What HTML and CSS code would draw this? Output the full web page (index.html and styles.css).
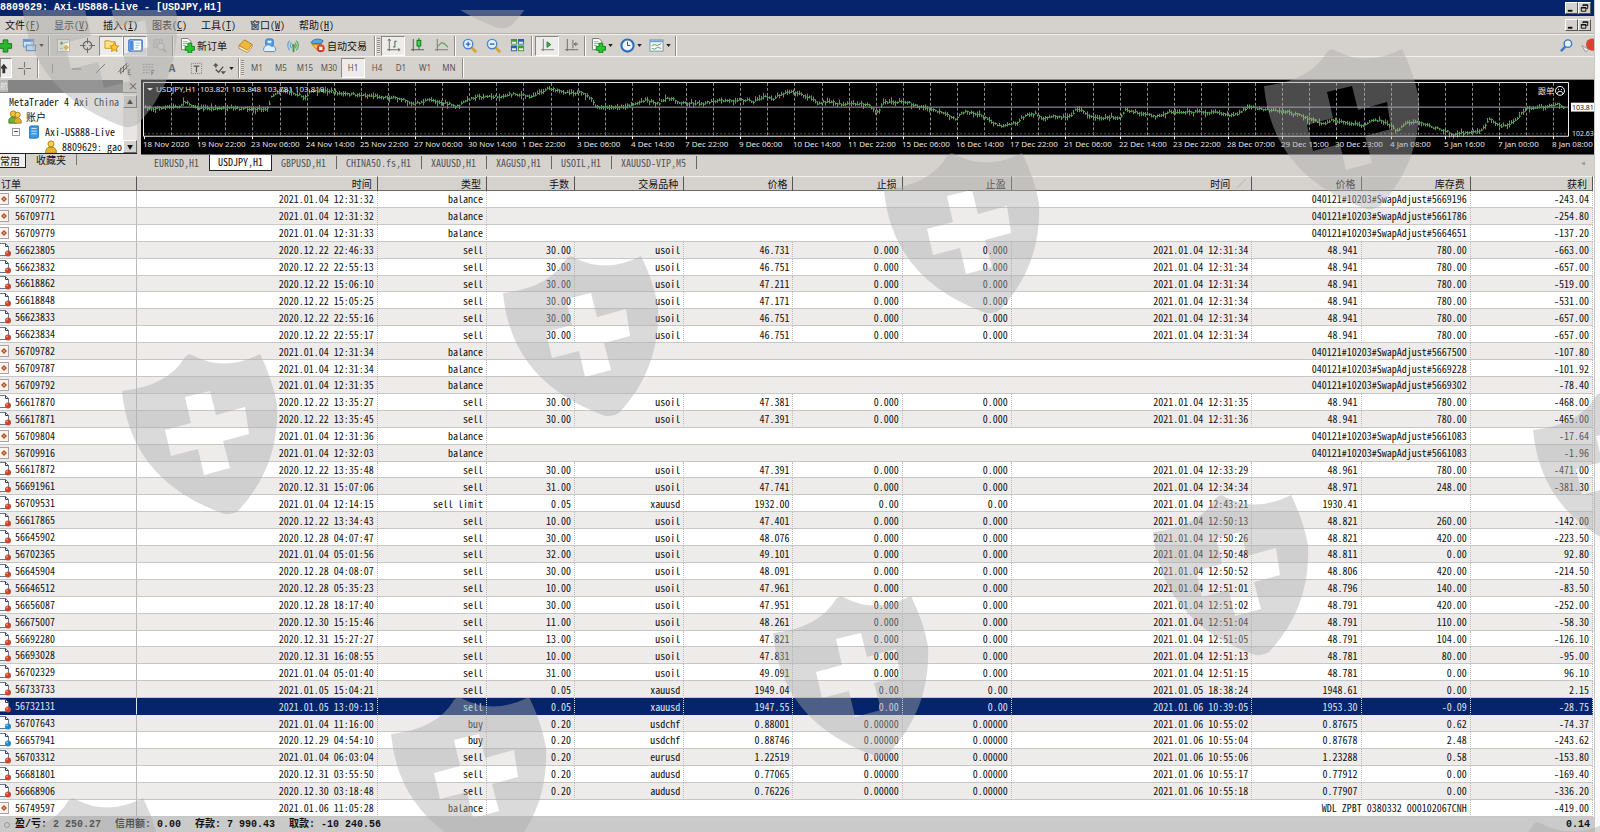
FILE: index.html
```html
<!DOCTYPE html>
<html lang="zh-CN">
<head>
<meta charset="utf-8">
<title>8809629: Axi-US888-Live - [USDJPY,H1]</title>
<link rel="stylesheet" href="styles.css">
</head>
<body>
<svg class="sprite" aria-hidden="true">
  <symbol id="i-plus" viewBox="0 0 16 16"><path d="M5.500 2h5v4h4v5h-4v4h-5v-4h-4V6h4z" fill="#2db52d" stroke="#0a7a12"/></symbol>
  <symbol id="i-windows" viewBox="0 0 16 16"><rect x="1.500" y="1.500" width="11" height="8" fill="#cfe2f6" stroke="#6d95c0"/><path d="M2 3h10" stroke="#5c8fd0" stroke-width="2"/><rect x="4.500" y="7.500" width="10" height="6" fill="#b9d2ee" stroke="#5f86b2"/></symbol>
  <symbol id="i-market" viewBox="0 0 16 16"><rect x="1.500" y="1.500" width="13" height="13" fill="#fbfbf2" stroke="#b9b59c"/><path d="M4 5.500l2-2 2 2-2 2z" fill="#3a9a4a"/><path d="M8 10l3-3 3 3-3 3z" fill="#e8b534"/><path d="M4 11h3M9 5h4" stroke="#8bb"/></symbol>
  <symbol id="i-target" viewBox="0 0 16 16" fill="none" stroke="#666"><circle cx="8" cy="8" r="4.500" stroke-width="1.300"/><path d="M8 0v6M8 10v6M0 8h6M10 8h6"/></symbol>
  <symbol id="i-star" viewBox="0 0 16 16"><path d="M1 3h5l1 1h5v7H1z" fill="#ffe28a" stroke="#c9932a"/><path d="M11 5l1.500 3.200 3.300.4-2.400 2.300.6 3.500-3-1.700-3 1.700.6-3.500L6.200 8.600l3.300-.4z" fill="#ffc928" stroke="#b87b12" stroke-width=".8"/></symbol>
  <symbol id="i-panel" viewBox="0 0 16 16"><rect x="1" y="2" width="14" height="12" rx="1" fill="#fff" stroke="#2d6cc0" stroke-width="1.500"/><rect x="2" y="3" width="4" height="10" fill="#4b8ee0"/><path d="M8 5.500h5M8 8h4M8 10.500h3" stroke="#9ab8dd"/></symbol>
  <symbol id="i-tester" viewBox="0 0 16 16" fill="none" stroke="#aaa"><path d="M2 2h9v8H2zM5 4v5M8 3v4"/><circle cx="9.500" cy="9" r="3.500" fill="#ddd"/><path d="M12 12l3 3" stroke-width="2"/></symbol>
  <symbol id="i-neworder" viewBox="0 0 16 16"><path d="M1.500.5h7l3 3v9h-10z" fill="#fff" stroke="#777"/><path d="M3 4h5M3 6h6M3 8h3" stroke="#8a8"/><path d="M8.500 5.500h4v3.500h3v4h-3v3h-4v-3h-3V9h3z" fill="#2fc02f" stroke="#0b8414"/></symbol>
  <symbol id="i-book" viewBox="0 0 16 16"><path d="M1 8l6-6 8 5-5 7z" fill="#efb93a" stroke="#b37a14"/><path d="M1 8v3l9 4.500 5-6V7l-5 6z" fill="#fff3cf" stroke="#b37a14" stroke-width=".8"/></symbol>
  <symbol id="i-cloud" viewBox="0 0 16 16"><rect x="4" y="1" width="8" height="8" rx="2" fill="#56a4ea" stroke="#2b72b8"/><path d="M6 4h4" stroke="#fff" stroke-width="2"/><path d="M3 14.500a3 3 0 010-5 4 4 0 017-.5 3 3 0 013 5.500z" fill="#e3f0fc" stroke="#4b8acb"/></symbol>
  <symbol id="i-signal" viewBox="0 0 16 16" fill="none"><path d="M4 13a7 7 0 010-10M6 11a4 4 0 010-6" stroke="#6aa7d8" stroke-width="1.400"/><path d="M11 3a7 7 0 010 10M9.500 5a4 4 0 010 6" stroke="#55b060" stroke-width="1.400"/><path d="M8 8v7" stroke="#3f9e4c" stroke-width="2"/><circle cx="8" cy="8" r="1.600" fill="#3f9e4c"/></symbol>
  <symbol id="i-auto" viewBox="0 0 16 16"><path d="M1 5c2-4 9-5 13-2l-2 3H4z" fill="#58a6de" stroke="#2b72a8"/><path d="M2 7h10l-3 7z" fill="#f2c343" stroke="#b98715"/><circle cx="11.500" cy="11" r="4.200" fill="#dd3a22"/><rect x="9.700" y="9.200" width="3.600" height="3.600" fill="#fff"/></symbol>
  <symbol id="i-bars" viewBox="0 0 16 16" fill="none" stroke="#666"><path d="M3.500 1v13M1 12.500h14M2 3l1.500-2L5 3M13 11l2 1.500-2 1.500"/><path d="M9.500 3v7M9.500 3.500h2M7.500 9.500h2" stroke="#3c6b3c"/></symbol>
  <symbol id="i-candles" viewBox="0 0 16 16" fill="none" stroke="#555"><path d="M3.500 1v13M1 12.500h14"/><path d="M9.500 0v12" stroke="#0a7a12"/><rect x="7.500" y="2.500" width="4" height="6" fill="#3fd052" stroke="#0a7a12"/></symbol>
  <symbol id="i-line" viewBox="0 0 16 16" fill="none" stroke="#777"><path d="M3.500 1v13M1 12.500h14"/><path d="M4 9l4-4 3 1 4 4" stroke="#5aa35e" stroke-width="1.300"/></symbol>
  <symbol id="i-zoomin" viewBox="0 0 16 16"><path d="M10 10l5 5" stroke="#d3a52e" stroke-width="3"/><circle cx="6.500" cy="6.500" r="5" fill="#e4f0fc" stroke="#4a86d0" stroke-width="1.500"/><path d="M4 6.500h5M6.500 4v5" stroke="#2d6cc0" stroke-width="1.500"/></symbol>
  <symbol id="i-zoomout" viewBox="0 0 16 16"><path d="M10 10l5 5" stroke="#d3a52e" stroke-width="3"/><circle cx="6.500" cy="6.500" r="5" fill="#e4f0fc" stroke="#4a86d0" stroke-width="1.500"/><path d="M4 6.500h5" stroke="#2d6cc0" stroke-width="1.500"/></symbol>
  <symbol id="i-tile" viewBox="0 0 16 16"><path d="M1 1h6.500v6H1zM8.500 8h6.500v6H8.500z" fill="#3f9b3a"/><path d="M8.500 1h6.500v6H8.500zM1 8h6.500v6H1z" fill="#2d5fae"/><path d="M2 4h4.500v2H2zM9.500 4H14v2H9.500zM2 11h4.500v2H2zM9.500 11H14v2H9.500z" fill="#e9f2e4"/></symbol>
  <symbol id="i-scroll" viewBox="0 0 16 16" fill="none" stroke="#777"><path d="M3.500 1v13M1 12.500h14"/><path d="M7.500 4l4 3-4 3z" fill="#3fae4a" stroke="#23832e"/></symbol>
  <symbol id="i-shift" viewBox="0 0 16 16" fill="none" stroke="#666"><path d="M3.500 1v13M1 12.500h14M9.500 2v9"/><path d="M15 6.500h-4M13 4.500l-2 2 2 2" stroke="#555"/></symbol>
  <symbol id="i-clock" viewBox="0 0 16 16"><circle cx="8" cy="8" r="6.500" fill="#eef5fd" stroke="#2d6cb8" stroke-width="2.200"/><path d="M8 4v4h3" fill="none" stroke="#444"/></symbol>
  <symbol id="i-template" viewBox="0 0 16 16"><rect x="1" y="2" width="14" height="12" fill="#f4f8f4" stroke="#7396ba"/><path d="M1 3.500h14" stroke="#6f9fd6" stroke-width="2"/><path d="M3 8l3-1 3 1 4-2M3 11l3 1 3-2 4 1" fill="none" stroke="#589a60"/></symbol>
  <symbol id="i-search" viewBox="0 0 16 16"><path d="M7 9l-5 5" stroke="#3b78c9" stroke-width="2.500"/><circle cx="9.500" cy="6" r="4" fill="#eaf3fd" stroke="#3b78c9" stroke-width="1.500"/></symbol>
  <symbol id="i-alert" viewBox="0 0 16 16"><path d="M3 8l4 7 3-3z" fill="#eee" stroke="#999"/><circle cx="14" cy="7" r="6.500" fill="#d8432f"/></symbol>
  <symbol id="i-cursor" viewBox="0 0 16 16"><path d="M-1 8L3 3l4 5H4.500v5h-3V8z" fill="#333"/></symbol>
  <symbol id="i-cross" viewBox="0 0 16 16"><path d="M8 1v6M8 9v6M1 8h6M9 8h6" stroke="#777" stroke-width="1.200"/></symbol>
  <symbol id="i-vline" viewBox="0 0 16 16"><path d="M8 3v10" stroke="#888"/></symbol>
  <symbol id="i-hline" viewBox="0 0 16 16"><path d="M3 8.500h10" stroke="#777"/></symbol>
  <symbol id="i-diag" viewBox="0 0 16 16"><path d="M3 13L13 3" stroke="#777"/></symbol>
  <symbol id="i-channel" viewBox="0 0 16 16" fill="none" stroke="#666"><path d="M1 12L11 2M4 13L13 4M4 7v7M7 5v7M10 2v7M12 9.500h3M12 12h2M12 14.500h3M12 9.500v5"/></symbol>
  <symbol id="i-fibo" viewBox="0 0 16 16" fill="none" stroke="#888"><path d="M2 3.500h12M2 6.500h12M2 9.500h9M2 12.500h7" stroke-dasharray="2 1"/><path d="M11.500 15v-5h3M11.500 12.500h2" stroke="#666"/></symbol>
  <symbol id="i-label" viewBox="0 0 16 16" fill="none" stroke="#777"><rect x="2.500" y="2.500" width="11" height="11" stroke-dasharray="1 1"/><path d="M5 5.500h6M8 5.500V12" stroke="#555" stroke-width="1.300"/></symbol>
  <symbol id="i-arrows" viewBox="0 0 16 16"><path d="M1 5l3-3 3 3-2 0v2h-2V5z" fill="#555"/><path d="M4 9l3 3 5-6" fill="none" stroke="#555" stroke-width="1.500"/><path d="M9 11h6l-3 3z" fill="#555"/></symbol>
  <symbol id="i-caret" viewBox="0 0 6 4"><path d="M0 0h6L3 4z" fill="#222"/></symbol>
  <symbol id="i-people" viewBox="0 0 16 16"><circle cx="6" cy="4.500" r="3.500" fill="#f0c03c" stroke="#a77b10"/><path d="M1 15V11q1-3 5-3t4 3v4z" fill="#6db33f" stroke="#437a1e"/><circle cx="11" cy="5.500" r="3" fill="#f5cf55" stroke="#a77b10"/><path d="M7 15v-3q1-3 4-3t4 3v3z" fill="#e4b02c" stroke="#a77b10"/></symbol>
  <symbol id="i-server" viewBox="0 0 16 16"><path d="M4 1h9v13l-2 1H3V2z" fill="#3c9be6" stroke="#1c66a8"/><path d="M5 4h6M5 7h6M5 10h6" stroke="#d6ebff"/></symbol>
  <symbol id="i-user" viewBox="0 0 16 16"><circle cx="8" cy="4.500" r="3.500" fill="#f5cf55" stroke="#a77b10"/><path d="M2 15v-3q1-4 6-4t6 4v3z" fill="#e8b52e" stroke="#a77b10"/></symbol>
  <symbol id="i-balance" viewBox="0 0 12 14"><rect x="-2.500" y="1.500" width="11" height="11" fill="#fbf3ec" stroke="#a9a0a8"/><path d="M4 4L7 7 4 10 1 7z" fill="#b4542a"/><path d="M3 7h2" stroke="#f4c9a0"/></symbol>
  <symbol id="i-sell" viewBox="0 0 12 14"><path d="M-3 .5H5.500L8.500 3.500V12.500H-3z" fill="#fff" stroke="#667a96"/><path d="M5.500.5v3h3" fill="none" stroke="#3a3f4c"/><circle cx="8" cy="10.500" r="3" fill="#c9452a"/><circle cx="7" cy="9.500" r="1" fill="#ee8f76"/></symbol>
  <symbol id="i-buy" viewBox="0 0 12 14"><path d="M-3 .5H5.500L8.500 3.500V12.500H-3z" fill="#fff" stroke="#667a96"/><path d="M5.500.5v3h3" fill="none" stroke="#3a3f4c"/><circle cx="8" cy="10.500" r="3" fill="#2187c9"/><circle cx="7" cy="9.500" r="1" fill="#86c6ee"/></symbol>
  <symbol id="i-min" viewBox="0 0 12 10"><path d="M2 8h5" stroke="#000" stroke-width="2"/></symbol>
  <symbol id="i-restore" viewBox="0 0 12 10" fill="none" stroke="#000"><path d="M4.500 3V1.500h5v4H8M4 2h6"/><path d="M2.500 4.500h5v4h-5zM2 5h6"/></symbol>
  <symbol id="i-shield" viewBox="0 0 156 162"><path fill-rule="evenodd" d="M0 37Q46 32 63 3Q67-2 72 2Q103 18 138 0Q150 24 155 50Q158 112 116 157Q107 163 97 158Q8 124 0 37ZM63 43L88 37 94 61 123 53 127 80 101 87 108 114 82 121 76 95 49 102 43 76 69 69Z"/></symbol>
</svg>

<div class="screen">
<main class="app">
  <header class="titlebar">
    <h1>8809629: Axi-US888-Live - [USDJPY,H1]</h1>
    <div class="winbtns"><button aria-label="最小化"><svg><use href="#i-min"/></svg></button><button aria-label="还原"><svg><use href="#i-restore"/></svg></button></div>
  </header>
  <nav class="menubar">
    <div class="menus">
      <button>文件(<u>F</u>)</button><button>显示(<u>V</u>)</button><button>插入(<u>I</u>)</button><button>图表(<u>C</u>)</button><button>工具(<u>T</u>)</button><button>窗口(<u>W</u>)</button><button>帮助(<u>H</u>)</button>
    </div>
    <div class="winbtns"><button aria-label="最小化图表"><svg><use href="#i-min"/></svg></button><button aria-label="还原图表"><svg><use href="#i-restore"/></svg></button></div>
  </nav>

  <div class="toolbar">
    <button class="tool cut drop" aria-label="新图表"><svg><use href="#i-plus"/></svg><svg class="caret"><use href="#i-caret"/></svg></button>
    <button class="tool drop" aria-label="配置文件"><svg><use href="#i-windows"/></svg><svg class="caret"><use href="#i-caret"/></svg></button>
    <span class="sep"></span>
    <button class="tool" aria-label="市场报价"><svg><use href="#i-market"/></svg></button>
    <button class="tool" aria-label="数据窗口"><svg><use href="#i-target"/></svg></button>
    <button class="tool on" aria-label="导航"><svg><use href="#i-star"/></svg></button>
    <button class="tool on" aria-label="终端"><svg><use href="#i-panel"/></svg></button>
    <button class="tool" aria-label="策略测试"><svg><use href="#i-tester"/></svg></button>
    <span class="sep"></span>
    <button class="tool text"><svg><use href="#i-neworder"/></svg>新订单</button>
    <button class="tool" aria-label="编辑器"><svg><use href="#i-book"/></svg></button>
    <button class="tool" aria-label="社区"><svg><use href="#i-cloud"/></svg></button>
    <button class="tool" aria-label="信号"><svg><use href="#i-signal"/></svg></button>
    <button class="tool text"><svg><use href="#i-auto"/></svg>自动交易</button>
    <span class="sep"></span><span class="grip"></span>
    <button class="tool on" aria-label="柱状图"><svg><use href="#i-bars"/></svg></button>
    <button class="tool" aria-label="蜡烛图"><svg><use href="#i-candles"/></svg></button>
    <button class="tool" aria-label="折线图"><svg><use href="#i-line"/></svg></button>
    <span class="sep"></span>
    <button class="tool" aria-label="放大"><svg><use href="#i-zoomin"/></svg></button>
    <button class="tool" aria-label="缩小"><svg><use href="#i-zoomout"/></svg></button>
    <button class="tool" aria-label="平铺"><svg><use href="#i-tile"/></svg></button>
    <span class="sep wide"></span>
    <button class="tool on" aria-label="自动滚动"><svg><use href="#i-scroll"/></svg></button>
    <button class="tool" aria-label="图表平移"><svg><use href="#i-shift"/></svg></button>
    <span class="sep"></span>
    <button class="tool drop" aria-label="指标"><svg><use href="#i-neworder"/></svg><svg class="caret"><use href="#i-caret"/></svg></button>
    <button class="tool drop" aria-label="周期"><svg><use href="#i-clock"/></svg><svg class="caret"><use href="#i-caret"/></svg></button>
    <button class="tool drop" aria-label="模板"><svg><use href="#i-template"/></svg><svg class="caret"><use href="#i-caret"/></svg></button>
    <span class="sep"></span>
    <div class="right">
      <button class="tool" aria-label="搜索"><svg><use href="#i-search"/></svg></button>
      <button class="tool alert" aria-label="提醒"><svg><use href="#i-alert"/></svg></button>
    </div>
  </div>

  <div class="toolbar second">
    <button class="tool on first" aria-label="光标"><svg><use href="#i-cursor"/></svg></button>
    <button class="tool" aria-label="十字线"><svg><use href="#i-cross"/></svg></button>
    <span class="sep"></span>
    <button class="tool" aria-label="垂直线"><svg><use href="#i-vline"/></svg></button>
    <button class="tool" aria-label="水平线"><svg><use href="#i-hline"/></svg></button>
    <button class="tool" aria-label="趋势线"><svg><use href="#i-diag"/></svg></button>
    <button class="tool" aria-label="通道"><svg><use href="#i-channel"/></svg></button>
    <button class="tool" aria-label="斐波纳契"><svg><use href="#i-fibo"/></svg></button>
    <button class="tool letter">A</button>
    <button class="tool" aria-label="标签"><svg><use href="#i-label"/></svg></button>
    <button class="tool drop" aria-label="箭头"><svg><use href="#i-arrows"/></svg><svg class="caret"><use href="#i-caret"/></svg></button>
    <span class="sep"></span><span class="grip"></span>
    <button class="tool tf">M1</button><button class="tool tf">M5</button><button class="tool tf">M15</button><button class="tool tf">M30</button><button class="tool tf on">H1</button><button class="tool tf">H4</button><button class="tool tf">D1</button><button class="tool tf">W1</button><button class="tool tf">MN</button>
    <span class="sep"></span>
  </div>

  <div class="work">
    <aside class="navigator">
      <div class="navhead"><span class="navtitle">航</span><button aria-label="关闭">×</button></div>
      <div class="treebox">
        <ul class="tree">
          <li class="l0">MetaTrader 4 Axi China</li>
          <li class="l1"><svg><use href="#i-people"/></svg>账户</li>
          <li class="l2"><span class="box"></span><svg><use href="#i-server"/></svg>Axi-US888-Live</li>
          <li class="l3"><svg><use href="#i-user"/></svg>8809629: gao</li>
        </ul>
        <div class="scroll"><button aria-label="向上">▲</button><button aria-label="向下">▼</button></div>
      </div>
      <div class="navtabs"><button class="active">常用</button><button>收藏夹</button></div>
    </aside>
    <section class="charts">
      <svg class="chart" id="chart" viewBox="0 0 1453 75" preserveAspectRatio="none" role="img" aria-label="USDJPY,H1"></svg>
      <div class="tabs" id="tabs">
        <button>EURUSD,H1</button><button class="active">USDJPY,H1</button><button>GBPUSD,H1</button><button>CHINA50.fs,H1</button><button>XAUUSD,H1</button><button>XAGUSD,H1</button><button>USOIL,H1</button><button>XAUUSD-VIP,M5</button><span class="more">◂</span>
      </div>
    </section>
  </div>

  <section class="terminal">
    <table>
      <colgroup><col class="c-order"><col class="c-time"><col class="c-mid"><col class="c-lots"><col class="c-mid"><col class="c-mid"><col class="c-mid"><col class="c-mid"><col class="c-time"><col class="c-mid"><col class="c-mid"><col class="c-profit"></colgroup>
      <thead><tr><th>订单</th><th>时间</th><th>类型</th><th>手数</th><th>交易品种</th><th>价格</th><th>止损</th><th>止盈</th><th class="sorted">时间<i>∕</i></th><th>价格</th><th>库存费</th><th>获利</th></tr></thead>
      <tbody id="rows"></tbody>
    </table>
  </section>
  <footer class="status"><span class="dot"></span><span>盈/亏: <b>2 250.27</b></span><span>信用额: <b>0.00</b></span><span>存款: <b>7 990.43</b></span><span>取款: <b>-10 240.56</b></span><b class="total">0.14</b></footer>
</main>
<div class="edge"></div>
</div>
<div class="marks" id="marks" aria-hidden="true"></div>
<script src="app.js"></script>
</body>
</html>
```

FILE: styles.css
```css
* { box-sizing: border-box; }
body {
  margin: 0;
  height: 100vh;
  overflow: hidden;
  position: relative;
  background: #d5d2ce;
  color: #111;
  font: 10px/14px "Noto Sans Mono CJK SC", "Noto Sans CJK SC", "Liberation Mono", monospace;
}
button { margin: 0; padding: 0; border: 0; background: none; color: inherit; font: inherit; }
.sprite { position: absolute; width: 0; height: 0; }
.screen { display: flex; height: 100vh; }
.app { flex: 1; min-width: 0; display: flex; flex-direction: column; }
.edge { width: 6px; background: #fafafa; border-left: 1px solid #c8c8c8; }

.titlebar { height: 16px; flex: none; display: flex; align-items: center; justify-content: space-between; background: #06246b; color: #fff; }
.titlebar h1 { margin: 0; font: bold 10px/16px "Liberation Mono", monospace; }
.winbtns { display: flex; padding-right: 3px; }
.winbtns button { width: 13px; height: 12px; background: #d5d2ce; border: 1px solid; border-color: #fff #555 #555 #fff; display: flex; }
.winbtns svg { width: 11px; height: 10px; }
.menubar { height: 18px; flex: none; display: flex; align-items: center; justify-content: space-between; border-bottom: 1px solid #b5b2ae; }
.menus { display: flex; gap: 14px; padding-left: 5px; }

.toolbar { height: 22px; flex: none; display: flex; align-items: center; border-top: 1px solid #f2f0ee; }
.second { height: 23px; }
.tool { width: 24px; height: 20px; display: flex; align-items: center; justify-content: center; flex: none; }
.tool svg { width: 15px; height: 15px; }
.tool.on { background: #eeecea; border: 1px solid; border-color: #8a8884 #fff #fff #8a8884; }
.tool .caret { width: 5px; height: 3px; margin-left: 2px; }
.tool.drop { width: 29px; }
.tool.cut { width: 18px; overflow: hidden; justify-content: flex-end; padding-right: 3px; }
.tool.cut svg:first-child { flex: none; }
.tool.first { width: 12px; overflow: hidden; justify-content: flex-start; }
.tool.first svg { flex: none; }
.tool.text { width: auto; padding: 0 6px 0 5px; gap: 2px; }
.tool.alert { width: 16px; }
.tool.letter { color: #666; font: bold 10px/14px "Noto Sans", sans-serif; }
.tool.tf { color: #555; font: 8px/14px "Noto Sans", sans-serif; }
.right { margin-left: auto; display: flex; }
.sep { width: 2px; height: 20px; margin: 0 1px; border-left: 1px solid #8f8c88; border-right: 1px solid #fff; flex: none; }
.sep.wide { margin: 0 2px; }
.grip { width: 3px; height: 16px; margin-right: 1px; background: repeating-linear-gradient(#8f8c88 0 1px, #e8e6e4 1px 2px); flex: none; }

.work { flex: none; display: flex; gap: 2px; }
.navigator { width: 139px; flex: none; display: flex; flex-direction: column; }
.navhead { height: 13px; display: flex; gap: 4px; align-items: center; }
.navtitle { flex: 1; background: linear-gradient(90deg, #b5b3b0 0 8px, #858585 8px); color: #eee; font-size: 8px; line-height: 12px; }
.navhead button { width: 12px; line-height: 12px; }
.treebox { height: 62px; display: flex; background: #fff; border-top: 1px solid #888; border-bottom: 1px solid #222; margin-right: 2px; overflow: hidden; }
.tree { flex: 1; min-width: 0; margin: 0; padding: 1px 0 0; list-style: none; overflow: hidden; white-space: nowrap; }
.tree li { height: 15px; display: flex; align-items: center; gap: 4px; }
.tree svg { width: 14px; height: 14px; flex: none; }
.tree .l0 { padding-left: 9px; }
.tree .l1 { padding-left: 8px; }
.tree .l2 { padding-left: 12px; }
.tree .l3 { padding-left: 44px; }
.box { width: 8px; height: 8px; border: 1px solid #999; background: linear-gradient(#555, #555) center / 4px 1px no-repeat; margin-right: 3px; }
.scroll { width: 14px; display: flex; flex-direction: column; justify-content: space-between; background: #e8e6e4; padding-top: 2px; }
.scroll button { height: 13px; font-size: 6px; line-height: 11px; background: #d5d2ce; border: 1px solid; border-color: #fff #666 #666 #fff; }
.navtabs { display: flex; height: 14px; line-height: 12px; }
.navtabs button { padding: 0 10px; border-right: 1px solid #777; height: 11px; line-height: 11px; }
.navtabs .active { padding: 0 5px 0 0; height: 14px; background: #f0eeec; border-bottom: 1px solid #222; border-right: 1px solid #222; }

.charts { flex: 1; min-width: 0; }
.chart { display: block; width: 100%; height: 75px; background: #000; border-top: 1px solid #8a8884; font: 8px "Noto Sans", sans-serif; }
.chart text { fill: #e4e4e4; }
.chart .price { font-size: 7px; }
.tabs { display: flex; height: 18px; align-items: flex-start; color: #555; border-top: 1px solid #666; padding-left: 1px; }
.tabs button { height: 13px; line-height: 13px; margin-top: 1px; padding: 0 10px 0 9px; border-right: 1px solid #666; }
.tabs button:first-child { border-right: 0; padding-left: 12px; }
.tabs .active { height: 16px; margin-top: 0; padding: 0 8px 2px; background: #fff; color: #111; border: 1px solid #222; border-top: 0; }
.more { margin-left: auto; padding-right: 8px; color: #999; }

.terminal { flex: 1; min-height: 0; margin-top: 4px; padding-right: 1px; background: #fff; }
table { width: 100%; height: 100%; table-layout: fixed; border-collapse: separate; border-spacing: 0; }
.c-order { width: 137px; } .c-time { width: 240px; } .c-mid { width: 109px; } .c-lots { width: 88px; } .c-profit { width: 122px; }
th { height: 15px; padding: 0 5px; font-weight: normal; line-height: 12px; text-align: right; background: #d5d2ce; border-top: 1px solid #f2f0ee; border-bottom: 1px solid #6e6b66; border-right: 1px solid #555; }
th:first-child { text-align: left; padding-left: 1px; }
th i { font-style: normal; color: #999; margin-left: 6px; }
td { height: 15px; padding: 0 3px; line-height: 13px; text-align: right; white-space: nowrap; overflow: hidden; border-bottom: 1px solid #c9c6c6; border-right: 1px dotted #bbb; }
td:first-child { text-align: left; padding-left: 0; border-right: 1px solid #bbb; }
td svg { width: 12px; height: 14px; vertical-align: top; margin-right: 3px; }
tr:nth-child(even) td { background: #eeebeb; }
tr.selected td { background: #06246b; color: #dfe4f0; border-color: #06246b #dfe4f0 #06246b; }

.status { height: 15px; flex: none; display: flex; align-items: center; gap: 14px; background: #cacaca; padding: 0 4px; font: bold 10px/15px "Liberation Mono", "Noto Sans CJK SC", monospace; }
.dot { width: 6px; height: 6px; border: 1px solid #999; border-radius: 50%; margin-right: -9px; }
.total { margin-left: auto; }

.marks { position: absolute; inset: 10px 0 0; overflow: hidden; pointer-events: none; }
.marks svg { position: absolute; width: 156px; height: 162px; fill: #aaa; fill-opacity: .44; }
```

FILE: app.js
```js
const B = 'balance', S = 'sell';
const P = '040121#10203#SwapAdjust#';
const rows = [
  ['56709772', '2021.01.04 12:31:32', B, P + '5669196', '-243.04'],
  ['56709771', '2021.01.04 12:31:32', B, P + '5661786', '-254.80'],
  ['56709779', '2021.01.04 12:31:33', B, P + '5664651', '-137.20'],
  ['56623805', '2020.12.22 22:46:33', S, '30.00', 'usoil', '46.731', '0.000', '0.000', '2021.01.04 12:31:34', '48.941', '780.00', '-663.00'],
  ['56623832', '2020.12.22 22:55:13', S, '30.00', 'usoil', '46.751', '0.000', '0.000', '2021.01.04 12:31:34', '48.941', '780.00', '-657.00'],
  ['56618862', '2020.12.22 15:06:10', S, '30.00', 'usoil', '47.211', '0.000', '0.000', '2021.01.04 12:31:34', '48.941', '780.00', '-519.00'],
  ['56618848', '2020.12.22 15:05:25', S, '30.00', 'usoil', '47.171', '0.000', '0.000', '2021.01.04 12:31:34', '48.941', '780.00', '-531.00'],
  ['56623833', '2020.12.22 22:55:16', S, '30.00', 'usoil', '46.751', '0.000', '0.000', '2021.01.04 12:31:34', '48.941', '780.00', '-657.00'],
  ['56623834', '2020.12.22 22:55:17', S, '30.00', 'usoil', '46.751', '0.000', '0.000', '2021.01.04 12:31:34', '48.941', '780.00', '-657.00'],
  ['56709782', '2021.01.04 12:31:34', B, P + '5667500', '-107.80'],
  ['56709787', '2021.01.04 12:31:34', B, P + '5669228', '-101.92'],
  ['56709792', '2021.01.04 12:31:35', B, P + '5669302', '-78.40'],
  ['56617870', '2020.12.22 13:35:27', S, '30.00', 'usoil', '47.381', '0.000', '0.000', '2021.01.04 12:31:35', '48.941', '780.00', '-468.00'],
  ['56617871', '2020.12.22 13:35:45', S, '30.00', 'usoil', '47.391', '0.000', '0.000', '2021.01.04 12:31:36', '48.941', '780.00', '-465.00'],
  ['56709804', '2021.01.04 12:31:36', B, P + '5661083', '-17.64'],
  ['56709916', '2021.01.04 12:32:03', B, P + '5661083', '-1.96'],
  ['56617872', '2020.12.22 13:35:48', S, '30.00', 'usoil', '47.391', '0.000', '0.000', '2021.01.04 12:33:29', '48.961', '780.00', '-471.00'],
  ['56691961', '2020.12.31 15:07:06', S, '31.00', 'usoil', '47.741', '0.000', '0.000', '2021.01.04 12:34:34', '48.971', '248.00', '-381.30'],
  ['56709531', '2021.01.04 12:14:15', 'sell limit', '0.05', 'xauusd', '1932.00', '0.00', '0.00', '2021.01.04 12:43:21', '1930.41', '', ''],
  ['56617865', '2020.12.22 13:34:43', S, '10.00', 'usoil', '47.401', '0.000', '0.000', '2021.01.04 12:50:13', '48.821', '260.00', '-142.00'],
  ['56645902', '2020.12.28 04:07:47', S, '30.00', 'usoil', '48.076', '0.000', '0.000', '2021.01.04 12:50:26', '48.821', '420.00', '-223.50'],
  ['56702365', '2021.01.04 05:01:56', S, '32.00', 'usoil', '49.101', '0.000', '0.000', '2021.01.04 12:50:48', '48.811', '0.00', '92.80'],
  ['56645904', '2020.12.28 04:08:07', S, '30.00', 'usoil', '48.091', '0.000', '0.000', '2021.01.04 12:50:52', '48.806', '420.00', '-214.50'],
  ['56646512', '2020.12.28 05:35:23', S, '10.00', 'usoil', '47.961', '0.000', '0.000', '2021.01.04 12:51:01', '48.796', '140.00', '-83.50'],
  ['56656087', '2020.12.28 18:17:40', S, '30.00', 'usoil', '47.951', '0.000', '0.000', '2021.01.04 12:51:02', '48.791', '420.00', '-252.00'],
  ['56675007', '2020.12.30 15:15:46', S, '11.00', 'usoil', '48.261', '0.000', '0.000', '2021.01.04 12:51:04', '48.791', '110.00', '-58.30'],
  ['56692280', '2020.12.31 15:27:27', S, '13.00', 'usoil', '47.821', '0.000', '0.000', '2021.01.04 12:51:05', '48.791', '104.00', '-126.10'],
  ['56693028', '2020.12.31 16:08:55', S, '10.00', 'usoil', '47.831', '0.000', '0.000', '2021.01.04 12:51:13', '48.781', '80.00', '-95.00'],
  ['56702329', '2021.01.04 05:01:40', S, '31.00', 'usoil', '49.091', '0.000', '0.000', '2021.01.04 12:51:15', '48.781', '0.00', '96.10'],
  ['56733733', '2021.01.05 15:04:21', S, '0.05', 'xauusd', '1949.04', '0.00', '0.00', '2021.01.05 18:38:24', '1948.61', '0.00', '2.15'],
  ['56732131', '2021.01.05 13:09:13', S, '0.05', 'xauusd', '1947.55', '0.00', '0.00', '2021.01.06 10:39:05', '1953.30', '-0.09', '-28.75'],
  ['56707643', '2021.01.04 11:16:00', 'buy', '0.20', 'usdchf', '0.88001', '0.00000', '0.00000', '2021.01.06 10:55:02', '0.87675', '0.62', '-74.37'],
  ['56657941', '2020.12.29 04:54:10', 'buy', '0.20', 'usdchf', '0.88746', '0.00000', '0.00000', '2021.01.06 10:55:04', '0.87678', '2.48', '-243.62'],
  ['56703312', '2021.01.04 06:03:04', S, '0.20', 'eurusd', '1.22519', '0.00000', '0.00000', '2021.01.06 10:55:06', '1.23288', '0.58', '-153.80'],
  ['56681801', '2020.12.31 03:55:50', S, '0.20', 'audusd', '0.77065', '0.00000', '0.00000', '2021.01.06 10:55:17', '0.77912', '0.00', '-169.40'],
  ['56668906', '2020.12.30 03:18:48', S, '0.20', 'audusd', '0.76226', '0.00000', '0.00000', '2021.01.06 10:55:18', '0.77907', '0.00', '-336.20'],
  ['56749597', '2021.01.06 11:05:28', B, 'WDL ZPBT 0380332 000102067CNH', '-419.00'],
];
const selected = '56732131';
document.getElementById('rows').innerHTML = rows.map(r => {
  const icon = r[2] === B ? 'balance' : r[2] === 'buy' ? 'buy' : 'sell';
  const cells = r.map((v, i) => {
    if (i === 0) return `<td><svg><use href="#i-${icon}"/></svg>${v}</td>`;
    if (r[2] === B && i === 3) return `<td colspan="8">${v}</td>`;
    return `<td>${v}</td>`;
  }).join('');
  return `<tr${r[0] === selected ? ' class="selected"' : ''}>${cells}</tr>`;
}).join('');

// Price curve: x, y pairs inside the 1453 x 75 chart area.
const pts = [3,28,9,29,24,28,39,27,42,21,47,24,59,29,99,29,127,29,130,16,139,11,149,12,159,16,162,18,169,12,189,11,199,14,215,15,239,17,262,19,271,25,289,20,304,24,317,27,324,21,334,17,359,17,372,14,389,17,402,11,407,8,419,12,439,13,449,18,455,28,479,28,494,24,504,20,517,24,527,18,539,23,559,24,579,21,604,20,612,22,622,17,632,19,639,14,649,12,659,15,671,19,676,24,689,22,702,25,714,24,726,25,737,33,741,23,764,22,774,26,794,31,814,39,824,31,839,36,859,47,869,44,874,44,884,36,894,34,901,40,914,36,921,38,929,36,936,29,951,38,979,38,984,31,1009,36,1019,37,1027,33,1059,32,1079,34,1093,36,1107,27,1119,29,1149,33,1184,45,1189,41,1222,46,1234,40,1249,46,1256,52,1266,43,1279,43,1292,48,1305,52,1311,55,1339,52,1343,47,1348,39,1359,47,1369,45,1379,35,1387,28,1399,28,1416,25,1424,28];
let seed = 7;
const rnd = () => (seed = (seed * 16807) % 2147483647) / 2147483647;
let bars = '', k = 0;
for (let x = 4; x < 1424; x += 2) {
  while (pts[k + 2] < x) k += 2;
  const t = (x - pts[k]) / (pts[k + 2] - pts[k]);
  const y = pts[k + 1] + t * (pts[k + 3] - pts[k + 1]) + (rnd() - .5) * 2;
  const up = 1 + rnd() * rnd() * 4, dn = 1 + rnd() * rnd() * 4;
  bars += `M${x + .5} ${(y - up).toFixed(1)}V${(y + dn).toFixed(1)}M${x} ${y.toFixed(1)}h2`;
}
const labels = ['18 Nov 2020', '19 Nov 22:00', '23 Nov 06:00', '24 Nov 14:00', '25 Nov 22:00', '27 Nov 06:00', '30 Nov 14:00', '1 Dec 22:00', '3 Dec 06:00', '4 Dec 14:00', '7 Dec 22:00', '9 Dec 06:00', '10 Dec 14:00', '11 Dec 22:00', '15 Dec 06:00', '16 Dec 14:00', '17 Dec 22:00', '21 Dec 06:00', '22 Dec 14:00', '23 Dec 22:00', '28 Dec 07:00', '29 Dec 15:00', '30 Dec 23:00', '4 Jan 08:00', '5 Jan 16:00', '7 Jan 00:00', '8 Jan 08:00'];
let grid = '', ticks = '';
for (let i = 1; i <= 52; i++) grid += `M${Math.round(3 + i * 27.1) + .5} 3V57`;
labels.forEach((_, i) => { ticks += `M${Math.round(3 + i * 54.2) + .5} 57v3`; });
document.getElementById('chart').innerHTML =
  `<path d="${grid}" stroke="#8f8f8f" stroke-dasharray="3 2"/>` +
  `<path d="M3 54.5H1428" stroke="#555" stroke-dasharray="2 2"/>` +
  `<path d="M3 27.500H1428" stroke="#a9a3b4"/>` +
  `<path d="${bars}" stroke="#3fae45" fill="none"/>` +
  `<path d="M2.500 2.500H1427.500V57H2.500z${ticks}" stroke="#f0f0f0" fill="none"/>` +
  `<path d="M6 8h6l-3 3z" fill="#fff"/>` +
  `<text x="15" y="12">USDJPY,H1&#160; 103.821 103.848 103.781 103.819</text>` +
  `<text x="1397" y="14" font-family="Noto Sans CJK SC">跟单</text><circle cx="1419" cy="11" r="4.500" fill="none" stroke="#fff"/><path d="M1416 14l1.500-2.500h3L1422 14M1417 9.500h1M1420 9.500h1" fill="none" stroke="#fff"/>` +
  `<path d="M1430 23h23v9h-23z" fill="#fff"/><text class="price" x="1431" y="30" style="fill:#111">103.81</text><text class="price" x="1431" y="57">102.63</text>` +
  labels.map((l, i) => `<text x="${Math.round(2 + i * 54.2)}" y="68">${l}</text>`).join('');

// Watermark positions, measured from the lower part of the title bar.
const shields = [[22, -43], [396, -142], [503, 246], [122, 344], [391, 687], [884, 143], [1264, 39], [773, 586], [1153, 485], [1533, 383], [5, 788], [1470, 812]];
document.getElementById('marks').innerHTML = shields.map(([x, y]) => `<svg style="left:${x}px;top:${y}px"><use href="#i-shield"/></svg>`).join('');
```
